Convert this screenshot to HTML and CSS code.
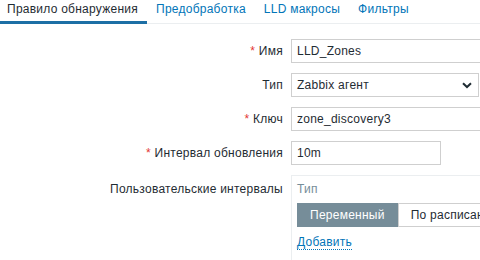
FILE: index.html
```html
<!DOCTYPE html>
<html lang="ru">
<head>
    <meta charset="UTF-8">
    <title>Правило обнаружения</title>
    <link rel="stylesheet" href="styles.css">
</head>
<body>
    <div class="tabs">
        <a class="tab active">Правило обнаружения</a>
        <a class="tab">Предобработка</a>
        <a class="tab">LLD макросы</a>
        <a class="tab">Фильтры</a>
    </div>

    <div class="form">
        <label class="label"><span class="req">*</span> Имя</label>
        <div class="field"><input class="text wide" type="text" value="LLD_Zones"></div>

        <label class="label">Тип</label>
        <div class="field">
            <div class="select">
                <span>Zabbix агент</span>
                <svg width="10" height="7" viewBox="0 0 10 7"><path d="M1 1.2 L5 5 L9 1.2" fill="none" stroke="#1f2c33" stroke-width="2"/></svg>
            </div>
        </div>

        <label class="label"><span class="req">*</span> Ключ</label>
        <div class="field"><input class="text wide" type="text" value="zone_discovery3"></div>

        <label class="label"><span class="req">*</span> Интервал обновления</label>
        <div class="field"><input class="text short" type="text" value="10m"></div>

        <label class="label label-top">Пользовательские интервалы</label>
        <div class="field">
            <div class="intervals">
                <div class="col-head">Тип</div>
                <div class="segmented">
                    <span class="seg on">Переменный</span>
                    <span class="seg">По расписанию</span>
                </div>
                <a class="link">Добавить</a>
            </div>
        </div>
    </div>
</body>
</html>
```

FILE: styles.css
```css
html, body {
    margin: 0;
    padding: 0;
    width: 480px;
    height: 260px;
    overflow: hidden;
    background: #fff;
}
body {
    font-family: "Liberation Sans", Arial, sans-serif;
    font-size: 12px;
    letter-spacing: 0.25px;
    color: #1f2c33;
}
.tabs {
    display: flex;
    border-bottom: 1px solid #ebeef0;
    margin-left: -2px;
}
.tab {
    display: block;
    padding: 0 9px 3px;
    line-height: 18px;
    color: #0275b8;
    border-bottom: 3px solid transparent;
    margin-bottom: -1px;
    white-space: nowrap;
}
.tab.active {
    color: #1f2c33;
    border-bottom-color: #1d6fa5;
}
.form {
    display: grid;
    grid-template-columns: 283px 1fr;
    column-gap: 8px;
    row-gap: 10px;
    margin-top: 15px;
}
.label {
    text-align: right;
    line-height: 24px;
    white-space: nowrap;
}
.label-top {
    margin-top: 2px;
}
.req {
    color: #e33734;
}
.field {
    display: flex;
    min-width: 0;
}
.text {
    box-sizing: border-box;
    height: 24px;
    border: 1px solid #cfcfcf;
    padding: 0 5px;
    font-family: inherit;
    font-size: 12px;
    letter-spacing: 0.25px;
    color: #1f2c33;
    background: #fff;
    outline: none;
}
.wide {
    width: 453px;
    flex: none;
}
.short {
    width: 150px;
}
.select {
    box-sizing: border-box;
    width: 188px;
    height: 24px;
    border: 1px solid #cfcfcf;
    padding: 0 6px 0 5px;
    display: flex;
    align-items: center;
    justify-content: space-between;
}
.intervals {
    box-sizing: border-box;
    width: 300px;
    height: 120px;
    flex: none;
    border: 1px solid #ebeef0;
    padding: 4px 5px;
}
.col-head {
    color: #768d99;
    line-height: 18px;
}
.segmented {
    display: flex;
    margin-top: 5px;
    height: 24px;
    white-space: nowrap;
}
.seg {
    box-sizing: border-box;
    padding: 0 12px;
    line-height: 22px;
    border: 1px solid #cfcfcf;
    background: #fff;
}
.seg.on {
    background: #768d99;
    border-color: #768d99;
    color: #fff;
}
.link {
    display: inline-block;
    margin-top: 9px;
    color: #0275b8;
    line-height: 13px;
    border-bottom: 1px dotted #0275b8;
}
```
